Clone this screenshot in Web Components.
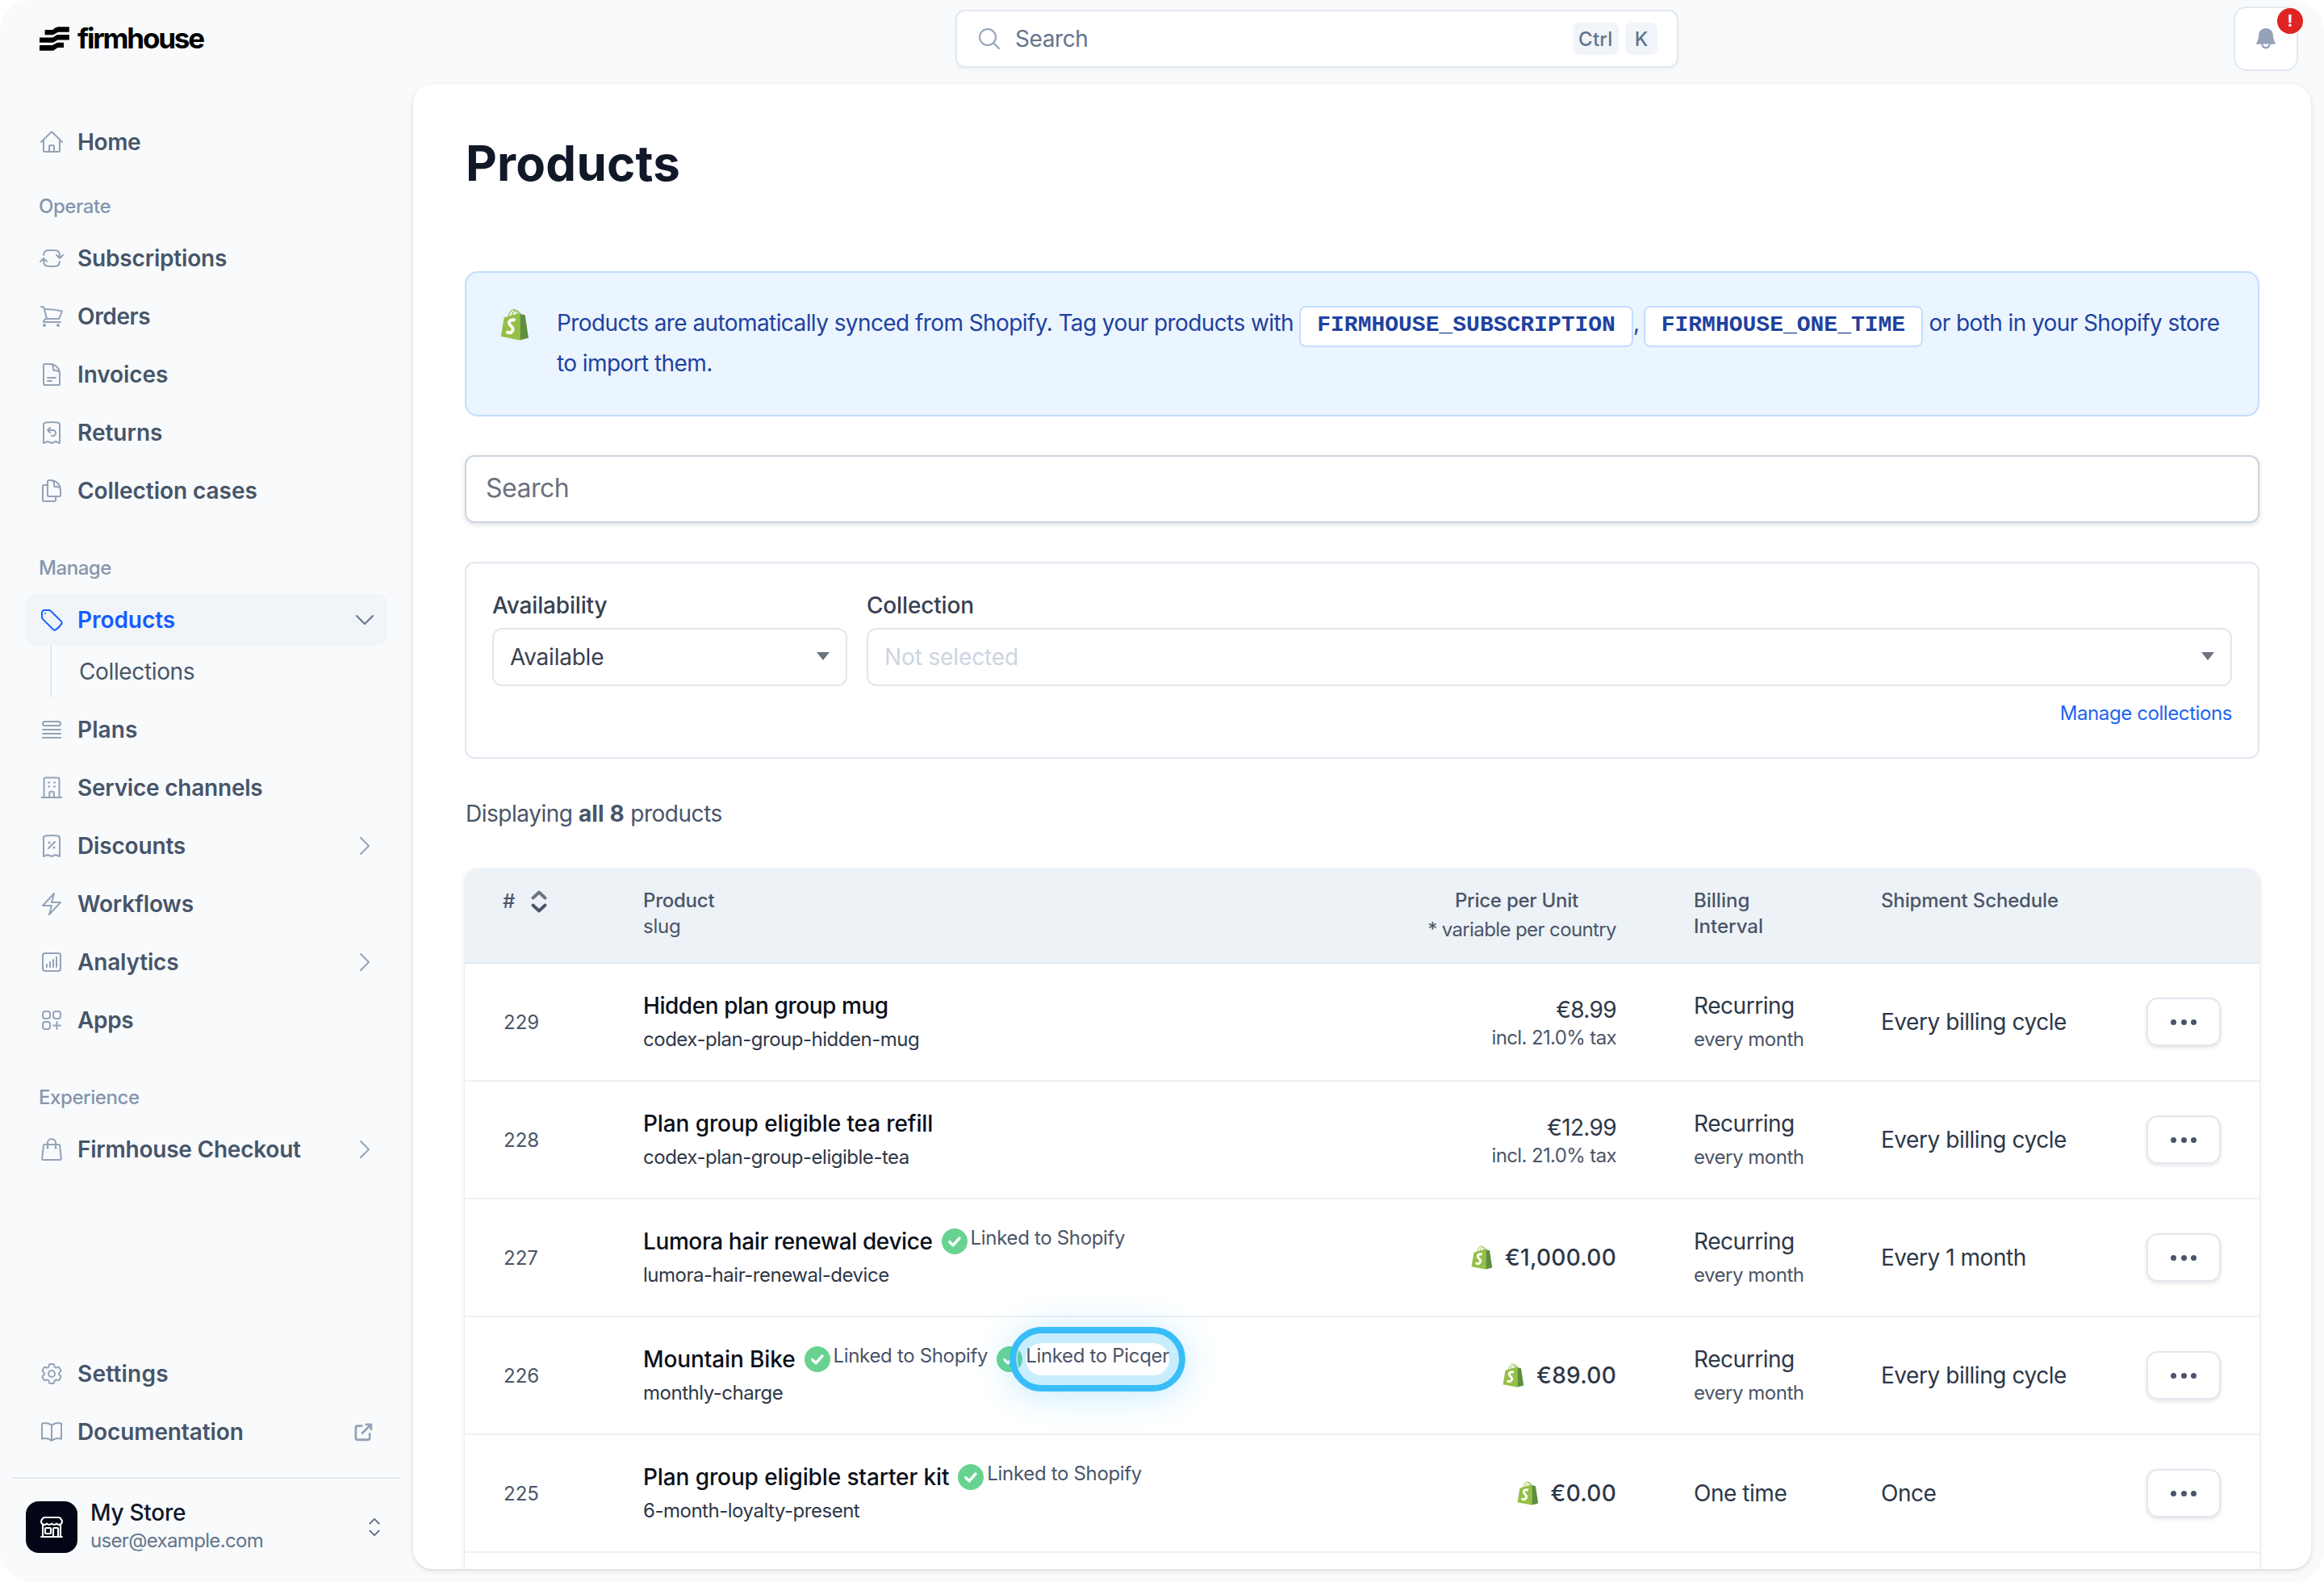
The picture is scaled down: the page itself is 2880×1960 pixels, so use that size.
<!DOCTYPE html>
<html lang="en">
<head>
<meta charset="utf-8">
<title>Products - Firmhouse</title>
<style>
    html, body {
        margin: 0;
        height: 100%;
        background: #fff;
    }
    body {
        font-family: Inter, "Liberation Sans", sans-serif;
        font-size: 28px;
        color: #374151;
    }
</style>
</head>
<body>
<app-shell>
    <brand-logo slot="brand"></brand-logo>
    <top-bar slot="top"></top-bar>
    <side-nav slot="nav">
        <nav-item icon="home" style="letter-spacing: -0.013em">Home</nav-item>
        <nav-label style="margin-top: 8px">Operate</nav-label>
        <nav-item icon="refresh">Subscriptions</nav-item>
        <nav-item icon="cart" style="letter-spacing: -0.013em">Orders</nav-item>
        <nav-item icon="document" style="letter-spacing: -0.003em">Invoices</nav-item>
        <nav-item icon="refund" style="letter-spacing: 0">Returns</nav-item>
        <nav-item icon="documents" style="letter-spacing: -0.002em">Collection cases</nav-item>
        <nav-label>Manage</nav-label>
        <nav-item icon="tag" arrow="down" active style="letter-spacing: -0.002em">Products<nav-sub slot="children">Collections</nav-sub></nav-item>
        <nav-item icon="list" style="letter-spacing: 0.004em">Plans</nav-item>
        <nav-item icon="building" style="letter-spacing: -0.008em">Service channels</nav-item>
        <nav-item icon="percent" arrow="right">Discounts</nav-item>
        <nav-item icon="bolt">Workflows</nav-item>
        <nav-item icon="chart" arrow="right">Analytics</nav-item>
        <nav-item icon="apps" style="letter-spacing: -0.012em">Apps</nav-item>
        <nav-label>Experience</nav-label>
        <nav-item icon="bag" arrow="right" style="letter-spacing: -0.008em">Firmhouse Checkout</nav-item>
        <nav-item slot="bottom" icon="cog" style="letter-spacing: 0.008em">Settings</nav-item>
        <nav-item slot="bottom" icon="book" arrow="external" style="letter-spacing: -0.004em">Documentation</nav-item>
        <account-switcher slot="account" name="My Store" email="user@example.com"></account-switcher>
    </side-nav>
    <products-page></products-page>
</app-shell>

<script>
const OUTLINE = {
    home: '<path d="m2.25 12 8.954-8.955c.44-.439 1.152-.439 1.591 0L21.75 12M4.5 9.75v10.125c0 .621.504 1.125 1.125 1.125H9.75v-4.875c0-.621.504-1.125 1.125-1.125h2.25c.621 0 1.125.504 1.125 1.125V21h4.125c.621 0 1.125-.504 1.125-1.125V9.75M8.25 21h8.25"/>',
    refresh: '<path d="M19.5 12c0-1.232-.046-2.453-.138-3.662a4.006 4.006 0 0 0-3.7-3.7 48.678 48.678 0 0 0-7.324 0 4.006 4.006 0 0 0-3.7 3.7c-.017.22-.032.441-.046.662M19.5 12l3-3m-3 3-3-3m-12 3c0 1.232.046 2.453.138 3.662a4.006 4.006 0 0 0 3.7 3.7 48.656 48.656 0 0 0 7.324 0 4.006 4.006 0 0 0 3.7-3.7c.017-.22.032-.441.046-.662M4.5 12l3 3m-3-3-3 3"/>',
    cart: '<path d="M2.25 3h1.386c.51 0 .955.343 1.087.835l.383 1.437M7.5 14.25a3 3 0 0 0-3 3h15.75m-12.75-3h11.218c1.121-2.3 2.1-4.684 2.924-7.138a60.114 60.114 0 0 0-16.536-1.84M7.5 14.25 5.106 5.272M6 20.25a.75.75 0 1 1-1.5 0 .75.75 0 0 1 1.5 0Zm12.75 0a.75.75 0 1 1-1.5 0 .75.75 0 0 1 1.5 0Z"/>',
    document: '<path d="M19.5 14.25v-2.625a3.375 3.375 0 0 0-3.375-3.375h-1.5A1.125 1.125 0 0 1 13.5 7.125v-1.5a3.375 3.375 0 0 0-3.375-3.375H8.25m0 12.75h7.5m-7.5 3H12M10.5 2.25H5.625c-.621 0-1.125.504-1.125 1.125v17.25c0 .621.504 1.125 1.125 1.125h12.75c.621 0 1.125-.504 1.125-1.125V11.25a9 9 0 0 0-9-9Z"/>',
    refund: '<path d="M8.25 9.75h4.875a2.625 2.625 0 0 1 0 5.25H12M8.25 9.75 10.5 7.5M8.25 9.75 10.5 12m9-7.243V21.75l-3.75-1.5-3.75 1.5-3.75-1.5-3.75 1.5V4.757c0-1.108.806-2.057 1.907-2.185a48.507 48.507 0 0 1 11.186 0c1.1.128 1.907 1.077 1.907 2.185Z"/>',
    documents: '<path d="M15.75 17.25v3.375c0 .621-.504 1.125-1.125 1.125h-9.75a1.125 1.125 0 0 1-1.125-1.125V7.875c0-.621.504-1.125 1.125-1.125H6.75a9.06 9.06 0 0 1 1.5.124m7.5 10.376h3.375c.621 0 1.125-.504 1.125-1.125V11.25c0-4.46-3.243-8.161-7.5-8.876a9.06 9.06 0 0 0-1.5-.124H9.375c-.621 0-1.125.504-1.125 1.125v3.5m7.5 10.375H9.375a1.125 1.125 0 0 1-1.125-1.125v-9.25m12 6.625v-1.875a3.375 3.375 0 0 0-3.375-3.375h-1.5a1.125 1.125 0 0 1-1.125-1.125v-1.5a3.375 3.375 0 0 0-3.375-3.375H9.75"/>',
    tag: '<path d="M9.568 3H5.25A2.25 2.25 0 0 0 3 5.25v4.318c0 .597.237 1.17.659 1.591l9.581 9.581c.699.699 1.78.872 2.607.33a18.095 18.095 0 0 0 5.223-5.223c.542-.827.369-1.908-.33-2.607L11.16 3.66A2.25 2.25 0 0 0 9.568 3Z"/><path d="M6 6h.008v.008H6V6Z"/>',
    list: '<path d="M3.75 12h16.5m-16.5 3.75h16.5M3.75 19.5h16.5M5.625 4.5h12.75a1.875 1.875 0 0 1 0 3.75H5.625a1.875 1.875 0 0 1 0-3.75Z"/>',
    building: '<path d="M2.7 21h18.6M4.9 21V4.1c0-.9.6-1.5 1.5-1.5h11.2c.9 0 1.5.6 1.5 1.5V21M8.9 7.2h1m-1 3.6h1m4.2-3.6h1m-1 3.6h1M9.9 21v-3.900c0-.9.6-1.5 1.5-1.5h1.200c.9 0 1.5.6 1.5 1.5V21"/>',
    percent: '<path d="m9 14.25 6-6m4.5-3.493V21.75l-3.75-1.5-3.75 1.5-3.75-1.5-3.75 1.5V4.757c0-1.108.806-2.057 1.907-2.185a48.507 48.507 0 0 1 11.186 0c1.1.128 1.907 1.077 1.907 2.185ZM9.75 9h.008v.008H9.75V9Zm.375 0a.375.375 0 1 1-.75 0 .375.375 0 0 1 .75 0Zm4.125 4.5h.008v.008h-.008V13.5Zm.375 0a.375.375 0 1 1-.75 0 .375.375 0 0 1 .75 0Z"/>',
    bolt: '<path d="m3.75 13.5 10.5-11.25L12 10.5h8.25L9.75 21.75 12 13.5H3.75Z"/>',
    chart: '<path d="M7.5 14.25v2.25m3-4.5v4.5m3-6.75v6.75m3-9v9M6 20.25h12A2.25 2.25 0 0 0 20.25 18V6A2.25 2.25 0 0 0 18 3.75H6A2.25 2.25 0 0 0 3.75 6v12A2.25 2.25 0 0 0 6 20.25Z"/>',
    apps: '<path d="M13.5 16.875h3.375m0 0h3.375m-3.375 0V13.5m0 3.375v3.375M6 10.5h2.25a2.25 2.25 0 0 0 2.25-2.25V6a2.25 2.25 0 0 0-2.25-2.25H6A2.25 2.25 0 0 0 3.75 6v2.25A2.25 2.25 0 0 0 6 10.5Zm0 9.75h2.25A2.25 2.25 0 0 0 10.5 18v-2.25a2.25 2.25 0 0 0-2.25-2.25H6a2.25 2.25 0 0 0-2.25 2.25V18A2.25 2.25 0 0 0 6 20.25Zm9.75-9.75H18a2.25 2.25 0 0 0 2.25-2.25V6A2.25 2.25 0 0 0 18 3.75h-2.25A2.25 2.25 0 0 0 13.5 6v2.25a2.25 2.25 0 0 0 2.25 2.25Z"/>',
    bag: '<path d="M15.75 10.5V6a3.75 3.75 0 1 0-7.5 0v4.5m11.356-1.993 1.263 12c.07.665-.45 1.243-1.119 1.243H4.25a1.125 1.125 0 0 1-1.12-1.243l1.264-12A1.125 1.125 0 0 1 5.513 7.5h12.974c.576 0 1.059.435 1.119 1.007ZM8.625 10.5a.375.375 0 1 1-.75 0 .375.375 0 0 1 .75 0Zm7.5 0a.375.375 0 1 1-.75 0 .375.375 0 0 1 .75 0Z"/>',
    cog: '<path d="M9.594 3.94c.09-.542.56-.94 1.11-.94h2.593c.55 0 1.02.398 1.11.94l.213 1.281c.063.374.313.686.645.87.074.04.147.083.22.127.325.196.72.257 1.075.124l1.217-.456a1.125 1.125 0 0 1 1.37.49l1.296 2.247a1.125 1.125 0 0 1-.26 1.431l-1.003.827c-.293.241-.438.613-.43.992a7.723 7.723 0 0 1 0 .255c-.008.378.137.75.43.991l1.004.827c.424.35.534.955.26 1.43l-1.298 2.247a1.125 1.125 0 0 1-1.369.491l-1.217-.456c-.355-.133-.75-.072-1.076.124a6.47 6.47 0 0 1-.22.128c-.331.183-.581.495-.644.869l-.213 1.281c-.09.543-.56.94-1.11.94h-2.594c-.55 0-1.019-.398-1.11-.94l-.213-1.281c-.062-.374-.312-.686-.644-.87a6.52 6.52 0 0 1-.22-.127c-.325-.196-.72-.257-1.076-.124l-1.217.456a1.125 1.125 0 0 1-1.369-.49l-1.297-2.247a1.125 1.125 0 0 1 .26-1.431l1.004-.827c.292-.24.437-.613.43-.991a6.932 6.932 0 0 1 0-.255c.007-.38-.138-.751-.43-.992l-1.004-.827a1.125 1.125 0 0 1-.26-1.43l1.297-2.247a1.125 1.125 0 0 1 1.37-.491l1.216.456c.356.133.751.072 1.076-.124.072-.044.146-.086.22-.128.332-.183.582-.495.644-.869l.214-1.28Z"/><path d="M15 12a3 3 0 1 1-6 0 3 3 0 0 1 6 0Z"/>',
    book: '<path d="M12 6.042A8.967 8.967 0 0 0 6 3.75c-1.052 0-2.062.18-3 .512v14.25A8.987 8.987 0 0 1 6 18c2.305 0 4.408.867 6 2.292m0-14.25a8.966 8.966 0 0 1 6-2.292c1.052 0 2.062.18 3 .512v14.25A8.987 8.987 0 0 0 18 18a8.967 8.967 0 0 0-6 2.292m0-14.25v14.25"/>',
    store: '<path d="M13.5 21v-7.5a.75.75 0 0 1 .75-.75h3a.75.75 0 0 1 .75.75V21m-4.5 0H2.36m11.14 0H18m0 0h3.64m-1.39 0V9.349M3.75 21V9.349m0 0a3.001 3.001 0 0 0 3.75-.615A2.993 2.993 0 0 0 9.75 9.75c.896 0 1.7-.393 2.25-1.016a2.993 2.993 0 0 0 2.25 1.016c.896 0 1.7-.393 2.25-1.015a3.001 3.001 0 0 0 3.75.614m-16.5 0a3.004 3.004 0 0 1-.621-4.72l1.189-1.19A1.5 1.5 0 0 1 5.378 3h13.243a1.5 1.5 0 0 1 1.06.44l1.19 1.189a3 3 0 0 1-.621 4.72M6.75 18h3.75a.75.75 0 0 0 .75-.75V13.5a.75.75 0 0 0-.75-.75H6.75a.75.75 0 0 0-.75.75v3.75c0 .414.336.75.75.75Z"/>',
    search: '<path d="m21 21-5.197-5.197m0 0A7.5 7.5 0 1 0 5.196 5.196a7.5 7.5 0 0 0 10.607 10.607Z"/>',
    down: '<path d="m19.5 8.25-7.5 7.5-7.5-7.5"/>',
    right: '<path d="m8.25 4.5 7.5 7.5-7.5 7.5"/>',
    external: '<g stroke-width="2.1"><path d="M9.200 6.400H5.100c-.8 0-1.400.6-1.400 1.400v10.100c0 .8.6 1.400 1.400 1.400h10.100c.8 0 1.400-.6 1.400-1.400v-4.100M9.800 13.200l8-8M13.300 5.200h4.600v4.600"/></g>',
    updown: '<path d="M8.25 15 12 18.75 15.75 15m-7.5-6L12 5.25 15.75 9"/>'
};

// Shared base: renders the class's static markup into an open shadow root
class BaseElement extends HTMLElement {
    constructor() {
        super();
        this.attachShadow({mode: 'open'});
    }

    connectedCallback() {
        const template = document.createElement('template');
        template.innerHTML = this.markup();
        this.shadowRoot.replaceChildren(template.content.cloneNode(true));
    }
}

class AppIcon extends BaseElement {
    markup() {
        return `
            <style>
                :host { display: block; flex: none; width: 32px; height: 32px; }
                svg { display: block; width: 100%; height: 100%; stroke-width: var(--icon-stroke, 1.5); }
            </style>
            <svg viewBox="0 0 24 24" fill="none" stroke="currentColor" stroke-linecap="round" stroke-linejoin="round">${OUTLINE[this.getAttribute('name')]}</svg>
        `;
    }
}

class ShopifyIcon extends BaseElement {
    markup() {
        return `
            <style>
                :host { display: block; flex: none; width: 36px; height: 40px; }
                svg { display: block; width: 100%; height: 100%; }
            </style>
            <svg viewBox="30 34 109 124">
                <path d="M60 68C63 50 72 38 80 38c9 0 14 8 15 22M73 66c1-14 9-24 16-24 8 0 12 6 14 15" fill="none" stroke="#95bf47" stroke-width="4"/>
                <path d="M43 70 104 52 107 157 31 142Z" fill="#95bf47"/>
                <path d="M104 52c2 0 3 2 5 5l12 2c2 0 3 1 3 3l13 86-31 8Z" fill="#5e8e3e"/>
                <path d="M86 80C74 75 62 81 63 91c1 11 16 12 14 25-2 12-13 15-25 8" fill="none" stroke="#fff" stroke-width="12"/>
            </svg>
        `;
    }
}

class BrandLogo extends BaseElement {
    markup() {
        return `
            <style>
                :host { display: flex; align-items: center; gap: 10px; height: 104px; padding-left: 48px; box-sizing: border-box; color: #000; }
                svg { width: 38px; height: 32px; margin-top: -8px; }
                span { font-size: 35px; font-weight: 750; line-height: 40px; letter-spacing: -0.063em; margin-top: -10px; }
            </style>
            <svg viewBox="0 0 38 32" fill="currentColor">
                <path d="M7.6 5H17l3.4-2.4L24 1.2h13.8v6.6H24L17.8 11.2H7.6Z"/>
                <path d="M1 14.4h16l6-3.4h14.8v6.4H23.5L18 20.7H1Z"/>
                <path d="M1 24h16l6-3.2h8v6.3H23.5L18 30.7H1Z"/>
            </svg>
            <span>firmhouse</span>
        `;
    }
}

class AppShell extends BaseElement {
    markup() {
        return `
            <style>
                :host {
                    display: grid;
                    grid-template-columns: 512px 1fr;
                    grid-template-rows: 104px 1fr;
                    width: 2880px;
                    height: 1960px;
                    background: #f8fafc;
                    border-radius: 40px;
                    overflow: hidden;
                }
                main {
                    margin: 0 16px 16px 0;
                    padding: 0 64px;
                    border-radius: 24px;
                    background: #fff;
                    overflow: hidden;
                    box-shadow: 0 2px 6px rgba(0, 0, 0, .1), 0 1px 3px rgba(0, 0, 0, .06);
                    min-height: 0;
                }
            </style>
            <slot name="brand"></slot>
            <slot name="top"></slot>
            <slot name="nav"></slot>
            <main><slot></slot></main>
        `;
    }
}

class TopBar extends BaseElement {
    markup() {
        return `
            <style>
                :host { display: grid; grid-template-columns: 672px 896px 1fr; color: #64748b; }
                .search {
                    grid-column: 2;
                    display: flex;
                    align-items: center;
                    gap: 8px;
                    height: 72px;
                    margin-top: 12px;
                    padding: 0 24px;
                    box-sizing: border-box;
                    border: 2px solid #e2e8f0;
                    border-radius: 12px;
                    background: #fff;
                    box-shadow: 0 2px 4px rgba(0, 0, 0, .05);
                }
                app-icon { color: #94a3b8; }
                .search span { flex: 1; padding-left: 8px; letter-spacing: -0.015em; }
                kbd {
                    display: grid;
                    place-items: center;
                    min-width: 40px;
                    height: 40px;
                    padding: 0 7.5px;
                    box-sizing: border-box;
                    border-radius: 8px;
                    background: #f1f5f9;
                    font: 500 24px Inter, sans-serif;
                    letter-spacing: 0.01em;
                }
                .bell {
                    position: relative;
                    justify-self: end;
                    display: grid;
                    place-items: center;
                    width: 80px;
                    height: 80px;
                    margin: 8px 32px 0 0;
                    box-sizing: border-box;
                    border: 2px solid #e2e8f0;
                    border-radius: 16px;
                    background: #fff;
                }
                .badge {
                    position: absolute;
                    top: 0;
                    right: -8px;
                    width: 32px;
                    height: 32px;
                    border-radius: 50%;
                    background: #e02424;
                    color: #fff;
                    font-size: 20px;
                    font-weight: 700;
                    line-height: 32px;
                    text-align: center;
                }
            </style>
            <div class="search">
                <app-icon name="search"></app-icon>
                <span>Search</span>
                <kbd>Ctrl</kbd><kbd>K</kbd>
            </div>
            <div class="bell">
                <svg width="24" height="26" viewBox="0 0 24 26">
                    <path d="M12 0C6.5 0 3.4 3.6 3.1 8.5 2.9 12.8 2 15.8.3 18.3c-.5.9-.2 1.5.7 1.5h22c.9 0 1.2-.6.7-1.5-1.7-2.5-2.6-5.5-2.8-9.8C20.6 3.6 17.5 0 12 0Z" fill="#94a3b8"/>
                    <path d="M7.5 19.5c.3 3 2.2 4.8 4.5 4.8s4.200-1.8 4.5-4.8" fill="#fff" stroke="#94a3b8" stroke-width="2.4"/>
                </svg>
                <span class="badge">!</span>
            </div>
        `;
    }
}

class SideNav extends BaseElement {
    markup() {
        return `
            <style>
                :host { display: flex; flex-direction: column; padding-top: 40px; box-sizing: border-box; min-height: 0; }
                nav { display: flex; flex-direction: column; gap: 8px; padding: 0 32px; }
                .bottom { margin-top: auto; }
                footer { margin: 24px 16px 0; border-top: 2px solid #e2e8f0; }
            </style>
            <nav><slot></slot></nav>
            <nav class="bottom"><slot name="bottom"></slot></nav>
            <footer><slot name="account"></slot></footer>
        `;
    }
}

class NavLabel extends BaseElement {
    markup() {
        return `
            <style>
                :host {
                    display: block;
                    margin: 24px 0 -8px;
                    padding-left: 16px;
                    color: #8595ad;
                    font-size: 24px;
                    font-weight: 500;
                    line-height: 64px;
                    letter-spacing: -0.018em;
                }
            </style>
            <slot></slot>
        `;
    }
}

class NavItem extends BaseElement {
    markup() {
        const arrow = this.getAttribute('arrow');
        return `
            <style>
                :host { display: block; color: #475569; font-weight: 600; letter-spacing: -0.006em; }
                .row { display: flex; align-items: center; gap: 16px; height: 64px; padding: 0 12px 0 16px; border-radius: 12px; }
                .icon { color: #94a3b8; }
                .text { flex: 1; }
                .arrow { color: #94a3b8; }
                :host([active]) .row { background: #f1f5f9; }
                :host([active]) .icon, :host([active]) .text { color: #155dfc; }
                :host([active]) .arrow { color: #64748b; }
            </style>
            <div class="row">
                <app-icon class="icon" name="${this.getAttribute('icon')}"></app-icon>
                <span class="text"><slot></slot></span>
                ${arrow ? `<app-icon class="arrow" name="${arrow}"></app-icon>` : ''}
            </div>
            <slot name="children"></slot>
        `;
    }
}

class NavSub extends BaseElement {
    markup() {
        return `
            <style>
                :host {
                    display: block;
                    margin-left: 30px;
                    padding-left: 34px;
                    border-left: 2px solid #e2e8f0;
                    color: #475569;
                    font-weight: 400;
                    line-height: 64px;
                    letter-spacing: -0.013em;
                }
            </style>
            <slot></slot>
        `;
    }
}

class AccountSwitcher extends BaseElement {
    markup() {
        return `
            <style>
                :host { display: flex; align-items: center; height: 128px; padding: 0 16px; box-sizing: border-box; }
                .avatar { display: grid; place-items: center; width: 64px; height: 64px; margin-top: -8px; border-radius: 16px; background: #020617; color: #fff; --icon-stroke: 1.6; }
                .who { flex: 1; padding-left: 16px; margin-top: -9px; }
                .name { color: #0f172a; font-weight: 500; line-height: 35px; letter-spacing: -0.01em; }
                .email { color: #64748b; font-size: 24px; line-height: 34px; letter-spacing: -0.0276em; }
                .switch { width: 36px; height: 36px; margin: -8px -2px 0 0; color: #64748b; --icon-stroke: 1.35; }
            </style>
            <div class="avatar"><app-icon name="store"></app-icon></div>
            <div class="who">
                <div class="name">${this.getAttribute('name')}</div>
                <div class="email">${this.getAttribute('email')}</div>
            </div>
            <app-icon class="switch" name="updown"></app-icon>
        `;
    }
}

class InfoBanner extends BaseElement {
    markup() {
        return `
            <style>
                :host {
                    display: flex;
                    height: 180px;
                    padding: 37px 30px 0 40px;
                    box-sizing: border-box;
                    border: 2px solid #c3ddfd;
                    border-radius: 16px;
                    background: #ebf5ff;
                    color: #1e429f;
                }
                shopify-icon { margin: 7px 34px 0 2px; }
                p { margin: 0; line-height: 50.4px; letter-spacing: -0.0209em; }
            </style>
            <shopify-icon></shopify-icon>
            <p><slot></slot></p>
        `;
    }
}

class CodeTag extends BaseElement {
    // no whitespace around <code>: the tag sits inline, right before punctuation
    markup() {
        return `<style>
                :host { display: inline; }
                code {
                    padding: 6px 20px 10px;
                    border: 2px solid #c3ddfd;
                    border-radius: 8px;
                    background: #fff;
                    font: bold 28px/1 "Liberation Mono", monospace;
                    letter-spacing: 0;
                }
            </style><code><slot></slot></code>`;
    }
}

class SelectField extends BaseElement {
    markup() {
        const value = this.getAttribute('value');
        return `
            <style>
                :host { display: block; }
                label { display: block; font-weight: 500; line-height: 41px; margin-bottom: 7px; letter-spacing: -0.006em; }
                .box {
                    display: flex;
                    align-items: center;
                    justify-content: space-between;
                    height: 72px;
                    padding: 0 20px;
                    box-sizing: border-box;
                    border: 2px solid #e2e8f0;
                    border-radius: 12px;
                    background: #fff;
                    letter-spacing: -0.008em;
                }
                .placeholder { color: #cbd5e1; letter-spacing: -0.0043em; }
                svg { margin-top: -2px; }
            </style>
            <label>${this.getAttribute('label')}</label>
            <div class="box">
                <span class="${value ? '' : 'placeholder'}">${value || 'Not selected'}</span>
                <svg width="16" height="10" viewBox="0 0 16 10"><path d="M0 0h16L8 10Z" fill="#6b7280"/></svg>
            </div>
        `;
    }
}

class FilterPanel extends BaseElement {
    markup() {
        return `
            <style>
                :host {
                    display: grid;
                    grid-template-columns: 440px 1fr;
                    column-gap: 24px;
                    align-content: start;
                    height: 244px;
                    padding: 32px 32px 0;
                    box-sizing: border-box;
                    border: 2px solid #e2e8f0;
                    border-radius: 12px;
                }
                a { grid-column: 2; justify-self: end; margin-top: 18px; color: #1c64f2; font-size: 24px; line-height: 32px; letter-spacing: -0.017em; }
            </style>
            <select-field label="Availability" value="Available"></select-field>
            <select-field label="Collection"></select-field>
            <a>Manage collections</a>
        `;
    }
}

class LinkedBadge extends BaseElement {
    markup() {
        return `
            <style>
                :host { display: flex; align-items: center; gap: 4px; color: #4a5568; font-size: 24px; font-weight: 400; line-height: 32px; letter-spacing: -0.0137em; }
                svg { display: block; flex: none; }
                .text { position: relative; padding-bottom: 9px; white-space: nowrap; }
                .ring {
                    position: absolute;
                    left: -20px;
                    top: -20px;
                    width: 218px;
                    height: 80px;
                    box-sizing: border-box;
                    border: 8px solid #38bdf8;
                    border-radius: 40px;
                    box-shadow: 0 4px 44px rgba(56, 189, 248, .3), inset 0 0 0 2px rgba(255, 255, 255, .7);
                }
                .ring::after {
                    content: "";
                    position: absolute;
                    inset: 12px;
                    border-radius: 20px;
                    box-shadow: 0 0 0 12px rgba(56, 189, 248, .28);
                }
            </style>
            <svg width="32" height="32" viewBox="0 0 32 32">
                <circle cx="16" cy="16" r="16" fill="#68d391"/>
                <path d="m9.8 16.6 4.2 4.2 8-8.8" fill="none" stroke="#fff" stroke-width="3.4" stroke-linecap="round" stroke-linejoin="round"/>
            </svg>
            <span class="text"><slot></slot>${this.hasAttribute('highlight') ? '<span class="ring"></span>' : ''}</span>
        `;
    }
}

class ProductRow extends BaseElement {
    markup() {
        const get = name => this.getAttribute(name) || '';
        const tax = get('tax');
        return `
            <style>
                :host {
                    display: grid;
                    grid-template-columns: var(--product-columns);
                    height: 146px;
                    padding: 0 48px;
                    box-sizing: border-box;
                    border-bottom: 2px solid #edf2f7;
                    color: #2d3748;
                }
                .center { display: flex; align-items: center; }
                .id { font-size: 24px; color: #4a5568; }
                .product { padding-top: 31px; }
                .name { display: flex; align-items: center; gap: 11px; height: 42px; color: #0b0f19; font-weight: 500; white-space: nowrap; }
                .name > span { letter-spacing: var(--name-spacing, -0.004em); }
                .small { margin-top: 5px; font-size: 24px; line-height: 32px; color: #4a5568; letter-spacing: -0.02em; }
                .product .small { color: #2d3748; }
                .price { display: flex; flex-direction: column; justify-content: center; margin-right: -1px; text-align: right; letter-spacing: -0.023em; line-height: 40px; }
                .price .small { margin-top: -1px; letter-spacing: -0.026em; }
                .synced { display: flex; align-items: center; justify-content: flex-end; gap: 15px; font-weight: 500; letter-spacing: 0.01em; }
                .synced shopify-icon { width: 27px; height: 30px; }
                .billing { padding: 31px 0 0 97px; line-height: 42px; letter-spacing: -0.0165em; }
                .billing.center { padding-top: 0; }
                .ship { padding-left: 1px; letter-spacing: -0.0163em; }
                button {
                    display: flex;
                    align-items: center;
                    justify-content: center;
                    gap: 5.5px;
                    width: 92px;
                    height: 60px;
                    margin-left: -1px;
                    padding: 0;
                    border: 2px solid #e2e8f0;
                    border-radius: 14px;
                    background: #fff;
                    box-shadow: 0 2px 5px rgba(0, 0, 0, .11);
                }
                i { width: 7px; height: 7px; border-radius: 50%; background: #4a5568; }
            </style>
            <div class="id center">${get('number')}</div>
            <div class="product">
                <div class="name"><span>${get('name')}</span><slot></slot></div>
                <div class="small">${get('slug')}</div>
            </div>
            <div class="price">
                ${tax
                    ? `<span>${get('price')}</span><span class="small">${tax}</span>`
                    : `<span class="synced"><shopify-icon></shopify-icon>${get('price')}</span>`}
            </div>
            ${get('every')
                ? `<div class="billing">${get('billing')}<div class="small">${get('every')}</div></div>`
                : `<div class="billing center">${get('billing')}</div>`}
            <div class="ship center">${get('shipment')}</div>
            <div class="center"><button aria-label="Actions"><i></i><i></i><i></i></button></div>
        `;
    }
}

class ProductTable extends BaseElement {
    markup() {
        return `
            <style>
                :host {
                    --product-columns: 173px 1fr 240px 328px 331px 91px;
                    display: block;
                    border-radius: 16px 16px 0 0;
                    box-shadow: 0 2px 6px rgba(0, 0, 0, .1), 0 1px 4px rgba(0, 0, 0, .06);
                    height: 1100px;
                }
                header {
                    display: grid;
                    grid-template-columns: var(--product-columns);
                    height: 118px;
                    padding: 24px 48px 0;
                    box-sizing: border-box;
                    border-bottom: 2px solid #e2e8f0;
                    border-radius: 16px 16px 0 0;
                    background: #edf2f7;
                    color: #4a5568;
                    font-size: 24px;
                    font-weight: 500;
                    line-height: 32px;
                    letter-spacing: -0.01em;
                }
                .number { display: flex; gap: 20px; align-items: center; height: 34px; margin-left: -1px; }
                .number svg { display: block; }
                .regular { font-weight: 400; }
                .price { margin-right: -1px; text-align: right; }
                .unit { padding-right: 47px; }
                .price .regular { line-height: 40px; letter-spacing: -0.0254em; white-space: nowrap; }
                .billing { padding-left: 97px; letter-spacing: 0; }
                .ship { padding-left: 1px; letter-spacing: -0.0065em; }
            </style>
            <header>
                <div class="number">#
                    <svg width="20" height="28" viewBox="0 0 20 28" fill="none" stroke-width="3.8" stroke-linecap="round" stroke-linejoin="round">
                        <path d="m2.5 9.5 7.5-7 7.5 7" stroke="#6b7280"/>
                        <path d="m2.5 18.5 7.5 7 7.5-7" stroke="#4a5568"/>
                    </svg>
                </div>
                <div>Product<div class="regular">slug</div></div>
                <div class="price"><div class="unit">Price per Unit</div><div class="regular">* variable per country</div></div>
                <div class="billing">Billing<br>Interval</div>
                <div class="ship">Shipment Schedule</div>
            </header>
            <slot></slot>
        `;
    }
}

class ProductsPage extends BaseElement {
    markup() {
        return `
            <style>
                :host { display: block; }
                h1 { margin: 0; padding: 62px 0 98px 1px; color: #111827; font-size: 60px; font-weight: 700; line-height: 72px; letter-spacing: 0.004em; }
                .second { margin-left: -2px; }
                .search {
                    height: 84px;
                    margin: 48px 0;
                    padding: 0 24px;
                    box-sizing: border-box;
                    border: 2px solid #cbd5e1;
                    border-radius: 12px;
                    background: #fff;
                    color: #6b7280;
                    font-size: 32px;
                    line-height: 78px;
                    letter-spacing: -0.016em;
                    box-shadow: 0 2px 6px rgba(0, 0, 0, .12);
                }
                .count { margin: 48px 0; padding-left: 1px; color: #4a5568; line-height: 40px; letter-spacing: -0.017em; }
                b { letter-spacing: 0.005em; }
            </style>
            <h1>Products</h1>
            <info-banner><span>Products are automatically synced from Shopify. Tag your products with </span><code-tag>FIRMHOUSE_SUBSCRIPTION</code-tag><span>, </span><code-tag class="second">FIRMHOUSE_ONE_TIME</code-tag><span> or both in your Shopify store</span><br><span>to import them.</span></info-banner>
            <div class="search">Search</div>
            <filter-panel></filter-panel>
            <div class="count">Displaying <b>all 8</b> products</div>
            <product-table>
                <product-row style="--name-spacing: -0.016em" number="229" name="Hidden plan group mug" slug="codex-plan-group-hidden-mug" price="€8.99" tax="incl. 21.0% tax" billing="Recurring" every="every month" shipment="Every billing cycle"></product-row>
                <product-row number="228" name="Plan group eligible tea refill" slug="codex-plan-group-eligible-tea" price="€12.99" tax="incl. 21.0% tax" billing="Recurring" every="every month" shipment="Every billing cycle"></product-row>
                <product-row style="--name-spacing: -0.014em" number="227" name="Lumora hair renewal device" slug="lumora-hair-renewal-device" price="€1,000.00" billing="Recurring" every="every month" shipment="Every 1 month">
                    <linked-badge>Linked to Shopify</linked-badge>
                </product-row>
                <product-row number="226" name="Mountain Bike" slug="monthly-charge" price="€89.00" billing="Recurring" every="every month" shipment="Every billing cycle">
                    <linked-badge>Linked to Shopify</linked-badge>
                    <linked-badge highlight>Linked to Picqer</linked-badge>
                </product-row>
                <product-row number="225" name="Plan group eligible starter kit" slug="6-month-loyalty-present" price="€0.00" billing="One time" shipment="Once">
                    <linked-badge>Linked to Shopify</linked-badge>
                </product-row>
            </product-table>
        `;
    }
}

customElements.define('app-icon', AppIcon);
customElements.define('shopify-icon', ShopifyIcon);
customElements.define('brand-logo', BrandLogo);
customElements.define('app-shell', AppShell);
customElements.define('top-bar', TopBar);
customElements.define('side-nav', SideNav);
customElements.define('nav-label', NavLabel);
customElements.define('nav-item', NavItem);
customElements.define('nav-sub', NavSub);
customElements.define('account-switcher', AccountSwitcher);
customElements.define('info-banner', InfoBanner);
customElements.define('code-tag', CodeTag);
customElements.define('select-field', SelectField);
customElements.define('filter-panel', FilterPanel);
customElements.define('linked-badge', LinkedBadge);
customElements.define('product-row', ProductRow);
customElements.define('product-table', ProductTable);
customElements.define('products-page', ProductsPage);
</script>
</body>
</html>
